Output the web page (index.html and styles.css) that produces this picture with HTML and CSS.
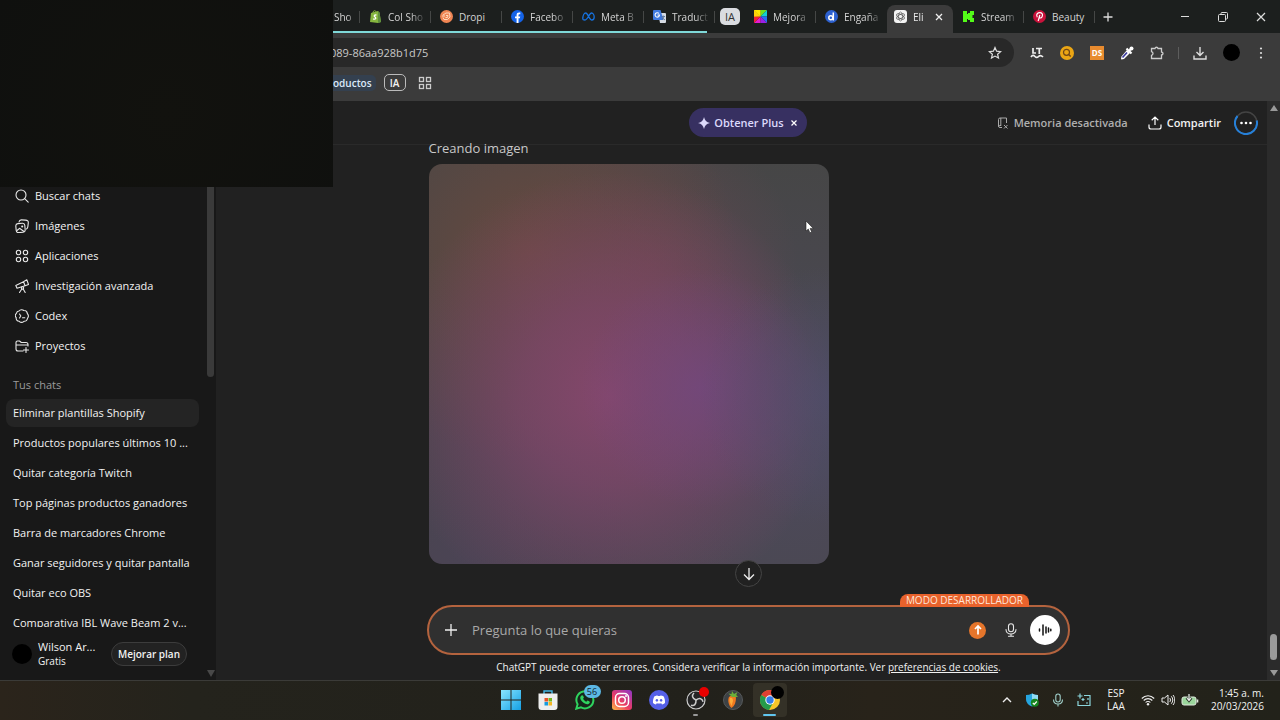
FILE: index.html
```html
<!DOCTYPE html>
<html lang="es">
<head>
<meta charset="utf-8">
<meta name="viewport" content="width=device-width, initial-scale=1">
<title>Eliminar plantillas Shopify</title>
<link rel="stylesheet" href="styles.css">
</head>
<body>
<div class="desktop">
  <header class="browser">
    <div class="tabstrip">
      <div class="tab-group">
        <button class="tab tab-cut"><span class="tab-title">Sho</span></button>
        <button class="tab">
          <svg class="fav" viewBox="0 0 13 13"><path d="M2 3l7-2 1.500 1.500L12 12l-3 1-8-1z" fill="#86b63f"/><path d="M9 1.500l1.500 1L12 12l-3 1z" fill="#5e8e3e"/><path d="M4 3c0-3 3-3 3.200-.5" fill="none" stroke="#86b63f"/><path d="M7.500 5.200C5.500 4.500 4.500 6 6 7s.7 2.800-1.800 1.800" fill="none" stroke="#fff" stroke-width="1.300"/></svg>
          <span class="tab-title">Col Sho</span></button>
        <button class="tab">
          <svg class="fav" viewBox="0 0 13 13"><circle cx="6.500" cy="6.500" r="6.500" fill="#ef8553"/><path d="M3 5l3-2h3.500L10 7 7.500 9.500H4L3 7.500M6 5.500h2L7.500 7.500H5.500M2 6h3" fill="none" stroke="#ffd8bd" stroke-width="1"/></svg>
          <span class="tab-title tab-full">Dropi</span></button>
        <button class="tab">
          <svg class="fav" viewBox="0 0 13 13"><circle cx="6.500" cy="6.500" r="6.500" fill="#1463e8"/><path d="M5.600 13V8.300H4V6.500h1.600V5c0-1.700.9-2.500 2.500-2.500l1.200.1v1.600h-.8c-.8 0-1 .4-1 1v1.300h1.700l-.3 1.800H7.500V13z" fill="#fff"/></svg>
          <span class="tab-title">Facebo</span></button>
        <button class="tab">
          <svg class="fav" viewBox="0 0 13 13"><path d="M.8 9C.8 6 2 3 3.800 3c2 0 3.700 7 6 7 1.500 0 2.400-1.100 2.400-3S11 3 9.500 3c-2.300 0-3.700 7-6.500 7C1.700 10 .8 10 .8 9z" fill="none" stroke="#1672df" stroke-width="1.300"/></svg>
          <span class="tab-title">Meta B</span></button>
        <button class="tab tab-last">
          <svg class="fav" viewBox="0 0 13 13"><path d="M5 3h7a1 1 0 0 1 1 1v8a1 1 0 0 1-1 1H7z" fill="#d5dbe4"/><path d="M1 0h6.500l3 10H1a1 1 0 0 1-1-1V1a1 1 0 0 1 1-1z" fill="#3f79df"/><path d="M6 3.500A2.200 2.200 0 1 0 6.500 5H4.500" fill="none" stroke="#fff" stroke-width="1.100"/><path d="M8.500 6.500h3.500M10.300 5.500v1M11.300 6.500L8.800 10M9 7.500l3 2.500" stroke="#536d95" stroke-width=".8" fill="none"/></svg>
          <span class="tab-title">Traduct</span></button>
      </div>
      <div class="chip-slot"><button class="group-chip">IA</button></div>
      <button class="tab">
        <svg class="fav" viewBox="0 0 13 13"><path d="M0 0h6.500v6.500z" fill="#ffe600"/><path d="M0 0l6.500 6.500L0 7z" fill="#ffa31c"/><path d="M6.500 0H13L6.500 6.500z" fill="#6fe11c"/><path d="M13 0v6.500H6.500z" fill="#13ced1"/><path d="M13 6.500V13L6.500 6.500z" fill="#276df2"/><path d="M6.500 6.500L13 13H6.500z" fill="#9a20e5"/><path d="M6.500 6.500V13H0z" fill="#e31bd0"/><path d="M0 6.500h6.500L0 13z" fill="#f32331"/><path d="M6.500 0v6.500H0V0z" fill="#ffe600" opacity=".7"/></svg>
        <span class="tab-title">Mejora</span></button>
      <button class="tab tab-last">
        <svg class="fav" viewBox="0 0 13 13"><circle cx="6.500" cy="6.500" r="6.500" fill="#2d61cf"/><circle cx="5.800" cy="7.800" r="2" fill="none" stroke="#fff" stroke-width="1.500"/><path d="M8.300 2.500v8" stroke="#fff" stroke-width="1.500"/></svg>
        <span class="tab-title">Engaña</span></button>
      <button class="tab tab-active">
        <svg class="fav" viewBox="0 0 13 13"><rect width="13" height="13" rx="3" fill="#f3f3f3"/><g fill="none" stroke="#555" stroke-width=".7"><ellipse cx="6.500" cy="6.500" rx="2" ry="4.500"/><ellipse cx="6.500" cy="6.500" rx="2" ry="4.500" transform="rotate(60 6.500 6.500)"/><ellipse cx="6.500" cy="6.500" rx="2" ry="4.500" transform="rotate(120 6.500 6.500)"/></g></svg>
        <span class="tab-title">Eli</span>
        <svg class="ico8" viewBox="0 0 8 8"><path d="M1 1l6 6M7 1L1 7" stroke="#eee" stroke-width="1.300"/></svg></button>
      <button class="tab">
        <svg class="fav" viewBox="0 0 13 13"><path d="M1 1h4v3h1V3h2V1h4v4h-1.500v3H12v4H8v-2H6V9H5v3H1z" fill="#53fc18"/></svg>
        <span class="tab-title">Stream</span></button>
      <button class="tab">
        <svg class="fav" viewBox="0 0 13 13"><circle cx="6.500" cy="6.500" r="6.500" fill="#c9123b"/><path d="M4.300 7.200C2.500 4 5 2.700 6.800 2.700c2.200 0 3 1.600 2.600 3.200-.5 2.200-2.400 2.500-3 1.600M6.800 5L5.200 11" fill="none" stroke="#fff" stroke-width="1.200"/></svg>
        <span class="tab-title tab-full">Beauty</span></button>
      <button class="icon-btn new-tab" aria-label="Nueva pestaña"><svg class="ico12" viewBox="0 0 12 12"><path d="M6 1.500v9M1.500 6h9" stroke="#ddd" stroke-width="1.300"/></svg></button>
      <div class="window-controls">
        <button class="icon-btn" aria-label="Minimizar"><svg class="ico12" viewBox="0 0 12 12"><path d="M2 5.500h8" stroke="#ddd"/></svg></button>
        <button class="icon-btn" aria-label="Restaurar"><svg class="ico12" viewBox="0 0 12 12"><g fill="none" stroke="#ddd"><rect x="1.500" y="3.500" width="7" height="7" rx="1"/><path d="M4 3.500v-1a1 1 0 0 1 1-1h4.500a1 1 0 0 1 1 1V7a1 1 0 0 1-1 1h-1"/></g></svg></button>
        <button class="icon-btn" aria-label="Cerrar"><svg class="ico12" viewBox="0 0 12 12"><path d="M2 2l8 8M10 2l-8 8" stroke="#ddd" stroke-width="1.200"/></svg></button>
      </div>
    </div>
    <div class="toolbar">
      <div class="address">
        <input class="url" type="text" aria-label="Dirección" value="089-86aa928b1d75">
        <button class="icon-btn" aria-label="Favorito"><svg class="ico14" viewBox="0 0 14 14"><path d="M7 1.500l1.600 3.700 4 .4-3 2.600.9 3.900L7 10.100l-3.500 2 .9-3.900-3-2.600 4-.4z" fill="none" stroke="#ddd" stroke-width="1.200"/></svg></button>
      </div>
      <div class="extensions">
        <button class="icon-btn" aria-label="LanguageTool"><svg class="ico14" viewBox="0 0 14 14"><path d="M3 2v5h3M6 2.500h6M9.300 2.500V8M1 11c1.500-2 2.500-2 4-.5s2.500 1 3.500 0S11 9 13 11" fill="none" stroke="#eee" stroke-width="1.700"/></svg></button>
        <button class="icon-btn" aria-label="Buscador"><svg class="ico14" viewBox="0 0 14 14"><circle cx="7" cy="7" r="7" fill="#eba614"/><circle cx="6.500" cy="6.300" r="3" fill="none" stroke="#704716" stroke-width="1.200"/><path d="M8.700 8.500l2 2" stroke="#704716" stroke-width="1.400"/></svg></button>
        <button class="ds-btn">DS</button>
        <button class="icon-btn" aria-label="Cuentagotas"><svg class="ico14" viewBox="0 0 14 14"><path d="M7 4l3 3-6 6-2.500.5L1 13l.5-2.500z" fill="#fff"/><path d="M7 6.500l-4.500 5" stroke="#3c3c9f" stroke-width="1.700"/><path d="M6.500 2.500l5 5M9 5l2.500-2.700" stroke="#fff" stroke-width="2.200"/><circle cx="11.500" cy="2.500" r="2" fill="#fff"/></svg></button>
        <button class="icon-btn" aria-label="Extensiones"><svg class="ico14" viewBox="0 0 14 14"><path d="M1.500 2.500H5c.3-1.700 2.700-1.700 3 0h3.500V6c2 .3 2 2.700 0 3v3.500h-10V9.300c2-.4 2-3.200 0-3.600z" fill="none" stroke="#ccc" stroke-width="1.300"/></svg></button>
        <span class="divider"></span>
        <button class="icon-btn" aria-label="Descargas"><svg class="ico14" viewBox="0 0 14 14"><path d="M7 1v8M3.500 6L7 9.500 10.500 6M1 9.500V13h12V9.500" fill="none" stroke="#ddd" stroke-width="1.400"/></svg></button>
        <button class="avatar-dot" aria-label="Perfil"></button>
        <button class="icon-btn kebab" aria-label="Menú"><svg class="ico14" viewBox="0 0 14 14"><g fill="#ddd"><circle cx="7" cy="2.500" r="1.100"/><circle cx="7" cy="7" r="1.100"/><circle cx="7" cy="11.500" r="1.100"/></g></svg></button>
      </div>
    </div>
    <nav class="bookmarks">
      <button class="bookmark-blue">oductos</button>
      <button class="bookmark-ia">IA</button>
      <button class="icon-btn" aria-label="Aplicaciones"><svg class="ico14" viewBox="0 0 14 14"><g fill="none" stroke="#ccc" stroke-width="1.300"><rect x="1.500" y="1.500" width="4" height="4"/><rect x="8.500" y="1.500" width="4" height="4"/><rect x="1.500" y="8.500" width="4" height="4"/><rect x="8.500" y="8.500" width="4" height="4"/></g></svg></button>
    </nav>
  </header>

  <div class="app">
    <aside class="sidebar">
      <div class="side-scroll">
        <nav class="side-nav">
          <a class="nav-item" href="#"><svg class="ico14" viewBox="0 0 14 14"><g class="line"><circle cx="6" cy="6" r="5"/><path d="M9.700 9.700l3.500 3.500"/></g></svg>Buscar chats</a>
          <a class="nav-item" href="#"><svg class="ico14" viewBox="0 0 14 14"><g class="line"><rect x="1" y="4.500" width="9" height="9" rx="2.300" transform="rotate(-5 5 9)"/><path d="M4 3C4.300 1.300 5 .8 6.500.9l4 .2c2 .2 3 1 2.800 2.800l-.5 4c-.2 1.500-.6 1.800-1.300 2.100M2 11.500l2.500-2.200 4.500 3.200"/><circle cx="7.200" cy="7.500" r=".5"/></g></svg>Imágenes</a>
          <a class="nav-item" href="#"><svg class="ico14" viewBox="0 0 14 14"><g class="line"><circle cx="3.500" cy="3.500" r="2.200"/><circle cx="10.500" cy="3.500" r="2.200"/><circle cx="3.500" cy="10.500" r="2.200"/><circle cx="10.500" cy="10.500" r="2.200"/></g></svg>Aplicaciones</a>
          <a class="nav-item" href="#"><svg class="ico14" viewBox="0 0 14 14"><g class="line"><path d="M.8 6.500L8.500 2.700l1.600 4L2 9.300zM8.500 2.700L11.800.8l1.700 4.600-3.400 1.300"/><circle cx="7.500" cy="9" r="1.200"/><path d="M6.800 10L4.500 13.500M8.200 10l2 3.500"/></g></svg>Investigación avanzada</a>
          <a class="nav-item" href="#"><svg class="ico14" viewBox="0 0 14 14"><g class="line"><path d="M4 2c1.200-1.500 3.500-1.600 4.800-.5 2-.1 3.400 1.200 3.500 3C13.700 6 13.500 8 12.500 9.300c-.2 2-1.800 3.200-3.500 3-1.600 1.400-3.600 1.200-4.800 0C2 12 .9 10.500 1.200 8.700.1 7.400.2 5.400 1.400 4.300 1.800 2.700 2.600 2.100 4 2z"/><path d="M4.500 5l1.300 2-1.300 2M7.500 8.800h2.300"/></g></svg>Codex</a>
          <a class="nav-item" href="#"><svg class="ico14" viewBox="0 0 14 14"><g class="line"><path d="M8 12H3a2 2 0 0 1-2-2V3.500C1 2.500 1.700 2 2.500 2h2l1.800 1.500H11a2 2 0 0 1 2 2V7M1 6h12M11 8.500v5M8.500 11h5"/></g></svg>Proyectos</a>
        </nav>
        <h2 class="side-title">Tus chats</h2>
        <nav class="chat-list">
          <a class="chat chat-active" href="#">Eliminar plantillas Shopify</a>
          <a class="chat" href="#">Productos populares últimos 10 ...</a>
          <a class="chat" href="#">Quitar categoría Twitch</a>
          <a class="chat" href="#">Top páginas productos ganadores</a>
          <a class="chat" href="#">Barra de marcadores Chrome</a>
          <a class="chat" href="#">Ganar seguidores y quitar pantalla</a>
          <a class="chat" href="#">Quitar eco OBS</a>
          <a class="chat" href="#">Comparativa JBL Wave Beam 2 v...</a>
        </nav>
      </div>
      <div class="profile">
        <span class="profile-pic"></span>
        <div class="profile-text"><span class="profile-name">Wilson Ar...</span><span class="profile-plan">Gratis</span></div>
        <button class="upgrade">Mejorar plan</button>
      </div>
      <div class="side-bar"><span class="side-thumb"></span><svg class="ico8" viewBox="0 0 8 8"><path d="M0 1h8L4 8z" fill="#484848"/></svg></div>
    </aside>

    <main class="main">
      <div class="main-column">
        <header class="chat-head">
          <span></span>
          <button class="plus-btn"><svg class="ico12" viewBox="0 0 12 12"><path d="M6 0c.8 3.600 2.400 5.200 6 6-3.600.8-5.200 2.400-6 6-.8-3.600-2.400-5.200-6-6 3.600-.8 5.200-2.400 6-6z" fill="#dcd9fb"/></svg>Obtener Plus<svg class="ico8" viewBox="0 0 8 8"><path d="M1.500 1.500l5 5M6.500 1.500l-5 5" stroke="#fff" stroke-width="1.200"/></svg></button>
          <div class="head-actions">
            <button class="head-btn muted"><svg class="ico12" viewBox="0 0 12 12"><path d="M5 10.500H3a1.500 1.500 0 0 1-1.500-1.500V2.500A1.500 1.500 0 0 1 3 1h6.500v5M3.800 1v8M1.500 9.500C1.500 8.500 2.500 8.500 4 8.500M7 8l3.500 3.500M10.500 8L7 11.500" fill="none" stroke="#aaa"/></svg>Memoria desactivada</button>
            <button class="head-btn"><svg class="ico14" viewBox="0 0 14 14"><path d="M7 9V1M3.700 4.200L7 1l3.300 3.200M1 8.500V11a2 2 0 0 0 2 2h8a2 2 0 0 0 2-2V8.500" fill="none" stroke="#fff" stroke-width="1.200"/></svg>Compartir</button>
            <button class="more" aria-label="Más opciones"><svg class="ico24" viewBox="0 0 24 24"><circle cx="12" cy="12" r="11" fill="none" stroke="#444" stroke-width="1.500"/><path d="M3.500 5A11 11 0 1 0 22.700 9.500" fill="none" stroke="#2680d9" stroke-width="2"/><g fill="#fff"><circle cx="7.500" cy="12" r="1.300"/><circle cx="12" cy="12" r="1.300"/><circle cx="16.500" cy="12" r="1.300"/></g></svg></button>
          </div>
        </header>
        <section class="thread">
          <div class="column">
            <p class="status">Creando imagen</p>
            <div class="placeholder">
              <svg class="pointer" viewBox="0 0 9 14"><path d="M1 1v10l2.300-2 1.600 3.800 1.800-.8-1.600-3.600H8.300z" fill="#fff" stroke="#222" stroke-width=".6"/></svg>
            </div>
          </div>
        </section>
        <footer class="composer-area">
          <button class="scroll-down" aria-label="Bajar"><svg class="ico14" viewBox="0 0 14 14"><path d="M7 1v11.500M2 7.500l5 5 5-5" fill="none" stroke="#eee" stroke-width="1.300"/></svg></button>
          <form class="composer">
            <span class="dev-badge">MODO DESARROLLADOR</span>
            <button type="button" class="icon-btn" aria-label="Añadir"><svg class="ico14" viewBox="0 0 14 14"><path d="M7 1v12M1 7h12" stroke="#eee" stroke-width="1.300"/></svg></button>
            <input class="prompt" type="text" placeholder="Pregunta lo que quieras" aria-label="Pregunta lo que quieras">
            <button type="button" class="send" aria-label="Enviar"><svg class="ico12" viewBox="0 0 12 12"><path d="M6 10.500v-8M3 5l3-3 3 3" fill="none" stroke="#fff" stroke-width="1.700"/></svg></button>
            <button type="button" class="icon-btn" aria-label="Dictar"><svg class="ico14" viewBox="0 0 14 14"><g class="line"><rect x="4.500" y=".8" width="5" height="8" rx="2.500"/><path d="M2 6.500c0 6 10 6 10 0M7 11v2.300M4.500 13.300h5"/></g></svg></button>
            <button type="button" class="voice" aria-label="Modo de voz"><svg class="ico14" viewBox="0 0 14 14"><path d="M1.500 6v2M5 2v10M8 4v6M10.500 5v4M12.800 6.300v1.400" stroke="#111" stroke-width="1.500" stroke-linecap="round"/></svg></button>
          </form>
          <p class="notice">ChatGPT puede cometer errores. Considera verificar la información importante. Ver <a href="#">preferencias de cookies</a>.</p>
        </footer>
      </div>
      <div class="main-bar"><svg class="ico8" viewBox="0 0 8 8"><path d="M0 7h8L4 1z" fill="#999"/></svg><span class="main-thumb"></span><svg class="ico8" viewBox="0 0 8 8"><path d="M0 1h8L4 7z" fill="#999"/></svg></div>
    </main>
  </div>

  <footer class="taskbar">
    <span></span>
    <div class="dock">
      <button class="dock-item" aria-label="Inicio"><svg class="ico20" viewBox="0 0 20 20"><defs><linearGradient id="win" x2="1" y2="1"><stop stop-color="#8ae6ff"/><stop offset="1" stop-color="#149fe4"/></linearGradient></defs><path d="M0 0h9.500v9.500H0zM10.500 0H20v9.500h-9.500zM0 10.500h9.500V20H0zM10.500 10.500H20V20h-9.500z" fill="url(#win)"/></svg></button>
      <button class="dock-item" aria-label="Tienda"><svg class="ico20" viewBox="0 0 20 20"><path d="M6 4V1h8v3" fill="none" stroke="#44b9e8" stroke-width="1.400"/><path d="M.5 3.500h19V17a3 3 0 0 1-3 3h-13a3 3 0 0 1-3-3z" fill="#eee"/><path d="M6.500 8H10v3.500H6.500z" fill="#e65328"/><path d="M10.500 8H14v3.500h-3.500z" fill="#75b51d"/><path d="M6.500 12H10v3.500H6.500z" fill="#169bdf"/><path d="M10.500 12H14v3.500h-3.500z" fill="#f5b522"/></svg></button>
      <button class="dock-item" aria-label="WhatsApp"><svg class="ico20" viewBox="0 0 20 20"><path d="M1.300 18.700l1.300-4.500A8.500 8.500 0 1 1 6 17.400z" fill="#17261b" stroke="#2fd35e" stroke-width="2"/><path d="M6.500 5.500c1-.8 1.600-.2 2.400 2l-.8 1.200c.8 1.500 1.800 2.400 3.200 3l1.200-1.200c2 .9 2.500 1.300 2.300 2-.7 2.100-3 2.100-5 1.100-2.300-1.100-4-3.200-4.500-5-.2-1.300.2-2.300 1.200-3.100z" fill="#2fd35e"/></svg><span class="count">56</span></button>
      <button class="dock-item" aria-label="Instagram"><svg class="ico20" viewBox="0 0 20 20"><defs><linearGradient id="insta" x1="0" y1="1" x2=".8" y2="0"><stop stop-color="#ffc247"/><stop offset=".45" stop-color="#ed3c60"/><stop offset="1" stop-color="#9b37bb"/></linearGradient></defs><rect width="20" height="20" rx="3" fill="url(#insta)"/><g fill="none" stroke="#fff" stroke-width="1.500"><rect x="3.500" y="3.500" width="13" height="13" rx="4"/><circle cx="10" cy="10" r="3.300"/></g><circle cx="14" cy="6" r="1" fill="#fff"/></svg></button>
      <button class="dock-item" aria-label="Discord"><svg class="ico20" viewBox="0 0 20 20"><circle cx="10" cy="10" r="10" fill="#5560e8"/><path d="M5.500 6.300C7 5.500 8 5.300 8.500 5.400l.4.700h2.200l.4-.7c1 0 2.100.4 3 .9 1.200 2 1.700 4.500 1.500 6.700-1 .8-2 1.200-3 1.400l-.7-1.100c-1.500.4-3.100.4-4.600 0L7 14.400c-1.100-.2-2.100-.7-3-1.400-.2-2.300.3-4.800 1.500-6.700z" fill="#fff"/><ellipse cx="7.900" cy="10.300" rx="1.200" ry="1.400" fill="#5560e8"/><ellipse cx="12.100" cy="10.300" rx="1.200" ry="1.400" fill="#5560e8"/></svg></button>
      <button class="dock-item" aria-label="OBS"><svg class="ico20" viewBox="0 0 20 20"><circle cx="10" cy="10" r="9" fill="#242425" stroke="#ccc" stroke-width="1.200"/><g fill="none" stroke="#ccc" stroke-width="1.500"><path d="M10 10C6 8 5.500 5.500 8 3"/><path d="M10 10C6 8 5.500 5.500 8 3" transform="rotate(120 10 10)"/><path d="M10 10C6 8 5.500 5.500 8 3" transform="rotate(240 10 10)"/></g></svg><span class="dot dot-red"></span><span class="mark"></span></button>
      <button class="dock-item" aria-label="FL Studio"><svg class="ico20" viewBox="0 0 20 20"><circle cx="10" cy="10" r="9.500" fill="#3d4144" stroke="#56595b"/><path d="M6 7c2-2 5-1.500 7 .5 0 5-1.500 8.500-4.500 10.500C5.500 15.500 4.500 10 6 7z" fill="#f17a20"/><path d="M7 8c1.500-1 3 0 3 3l-1.500 5C7 13 6 10 7 8z" fill="#ffad38"/><path d="M9 7L5.500 3.500l3 .5L9 1l2 3 3.500-2-1.300 3L15 7z" fill="#6caf3a"/></svg></button>
      <button class="dock-item dock-current" aria-label="Chrome"><svg class="ico20" viewBox="0 0 20 20"><circle cx="10" cy="10" r="10" fill="#f8c529"/><path d="M10 10L1.300 5A10 10 0 0 1 18.700 5z" fill="#df4033"/><path d="M10 10L1.300 5A10 10 0 0 0 9 20l4.500-8z" fill="#259b4b"/><circle cx="10" cy="10" r="4.700" fill="#fff"/><circle cx="10" cy="10" r="3.700" fill="#357de8"/></svg><span class="dot dot-black"></span><span class="mark mark-blue"></span></button>
    </div>
    <div class="tray">
      <svg class="ico12" viewBox="0 0 12 12"><path d="M2 8l4-4 4 4" fill="none" stroke="#eee" stroke-width="1.400"/></svg>
      <svg class="ico14" viewBox="0 0 14 14"><path d="M1 2c2 0 4-.5 6-1.500C9 1.500 11 2 13 2v4c0 4-3 6.500-6 7.500C4 12.500 1 10 1 6z" fill="#26a5df"/><path d="M7 .5C9 1.500 11 2 13 2v5H7z" fill="#8fdcf5"/><circle cx="9.800" cy="9.800" r="4" fill="#15851f"/><path d="M7.800 9.800l1.400 1.500 2.600-2.800" fill="none" stroke="#fff" stroke-width="1.200"/></svg>
      <svg class="ico14" viewBox="0 0 14 14"><g fill="none" stroke="#a0cfca" stroke-width="1.100"><rect x="4.800" y="1" width="4.400" height="8" rx="2.200"/><path d="M2.500 6.500c0 6 9 6 9 0M7 11v2.500"/></g></svg>
      <svg class="ico14" viewBox="0 0 14 14"><g fill="none" stroke="#8cd6dc" stroke-width="1.200"><path d="M7 2.500h6v10H1V8"/><path d="M3 .5v5M.5 3h5M6 5v3M4.500 6.500h3M11 5v2M11 10H9"/></g></svg>
      <span class="lang">ESP<br>LAA</span>
      <div class="system">
        <svg class="ico14" viewBox="0 0 14 14"><g fill="none" stroke="#eee" stroke-width="1.100"><path d="M.8 5.500c3.500-3.600 8.900-3.600 12.400 0M2.700 7.500c2.400-2.500 6.200-2.500 8.600 0M4.600 9.500c1.300-1.400 3.500-1.400 4.800 0"/></g><circle cx="7" cy="11.300" r="1.200" fill="#eee"/></svg>
        <svg class="ico14" viewBox="0 0 14 14"><path d="M1 5h2.500L7 2v10L3.500 9H1zM8.700 5c1 1 1 3 0 4M10.300 3.300c2 2 2 5.400 0 7.400M12 2c2.300 2.800 2.300 7.200 0 10" fill="none" stroke="#eee"/></svg>
        <svg class="battery" viewBox="0 0 18 14"><rect x="1" y="4" width="14" height="8" rx="2" fill="#9bd69c" stroke="#dfe8dd"/><path d="M16.500 6.500v3" stroke="#dfe8dd" stroke-width="1.600"/><path d="M8 1v6M5.500 5L8 8l2.500-3" fill="none" stroke="#273427" stroke-width="2.400"/><path d="M8 1v6M6 5l2 2.500L10 5" fill="none" stroke="#eee" stroke-width="1.200"/></svg>
      </div>
      <time class="clock">1:45 a. m.<br>20/03/2026</time>
    </div>
  </footer>
  <div class="camera" aria-hidden="true"></div>
</div>
</body>
</html>
```
FILE: styles.css
```css
* { box-sizing: border-box; }
body { margin: 0; background: #212121; color: #f2f2f2; font: 11px/16px "Open Sans", "Noto Sans", sans-serif; }
button, input { font: inherit; color: inherit; border: 0; background: none; padding: 0; margin: 0; outline: 0; }
h2, p { margin: 0; font-weight: 400; }
a { color: inherit; }
svg { display: block; flex: none; }
.line { fill: none; stroke: #e8e8e8; stroke-width: 1.100; stroke-linecap: round; stroke-linejoin: round; }
.ico8 { width: 8px; height: 8px; }
.ico12 { width: 12px; height: 12px; }
.ico14 { width: 14px; height: 14px; }
.ico20 { width: 20px; height: 20px; }
.ico24 { width: 24px; height: 24px; }
.icon-btn { display: flex; align-items: center; justify-content: center; flex: none; }
.desktop { display: flex; flex-direction: column; height: 100vh; overflow: hidden; }

/* Browser chrome */
.browser { flex: none; background: #3b3b3b; }
.tabstrip { display: flex; height: 33px; padding-left: 333px; background: #1c1f1e; }
.tab-group { display: flex; position: relative; }
.tab-group::after { content: ""; position: absolute; left: 0; right: 8px; bottom: 0; height: 2px; background: #7fd8d8; }
.tab { position: relative; display: flex; align-items: center; gap: 6px; width: 71px; flex: none; padding: 0 5px 0 9px; font-size: 10px; color: #d4d4d4; text-align: left; }
.tab::after { content: ""; position: absolute; right: 0; top: 11px; height: 12px; width: 1px; background: #454746; }
.tab-last::after, .tab-active::after { display: none; }
.tab-group .tab-last::after { display: block; }
.tab-cut { width: 27px; padding: 0 4px 0 1px; }
.fav { width: 13px; height: 13px; }
.tab-title { flex: 1; min-width: 0; white-space: nowrap; mask-image: linear-gradient(to right, #000 60%, transparent); }
.tab-full { mask-image: none; }
.tab-active { width: 66px; padding: 0 10px 5px 7px; margin-top: 5px; background: #3b3b3b; border-radius: 8px 8px 0 0; color: #e8e8e8; }
.chip-slot { display: flex; align-items: center; justify-content: center; width: 30px; }
.group-chip { width: 20px; height: 17px; border-radius: 5px; background: #dadce0; color: #333; line-height: 16px; }
.new-tab { width: 26px; }
.window-controls { display: flex; gap: 26px; margin-left: auto; padding-right: 13px; }
.toolbar { display: flex; align-items: center; height: 39px; padding: 0 12px 0 320px; }
.address { display: flex; align-items: center; flex: 1; height: 29px; padding: 0 12px 0 10px; background: #282828; border-radius: 0 15px 15px 0; }
.url { flex: 1; min-width: 0; color: #c9c9c9; }
.extensions { display: flex; align-items: center; gap: 16px; margin-left: 16px; }
.ds-btn { width: 14px; height: 14px; background: #e88b2f; color: #fff; font-size: 8px; line-height: 14px; font-weight: 700; text-align: center; }
.divider { width: 1px; height: 12px; margin: 0 -2px; background: #5d5d5d; }
.avatar-dot { width: 17px; height: 17px; border-radius: 50%; background: #000; }
.kebab { margin-left: -2px; }
.bookmarks { display: flex; align-items: center; height: 29px; padding: 0 0 8px 333px; gap: 8px; }
.bookmark-blue { height: 16px; padding-right: 4px; background: #34404f; color: #dbe8f8; font-size: 10px; line-height: 14px; font-weight: 600; border-radius: 0 5px 5px 0; }
.bookmark-ia { width: 22px; height: 17px; margin-right: 4px; border: 1px solid #bbb; border-radius: 5px; font-size: 10px; font-weight: 600; line-height: 14px; }
.camera { position: fixed; left: 0; top: 0; width: 333px; height: 187px; background: radial-gradient(circle at 50% 60%, #12120e, #0f100e); }

/* Sidebar */
.app { display: flex; flex: 1; min-height: 0; }
.sidebar { position: relative; display: flex; flex-direction: column; width: 216px; flex: none; background: #181818; }
.side-scroll { flex: 1; min-height: 0; overflow: hidden; padding: 80px 17px 0 6px; }
.nav-item { display: flex; align-items: center; gap: 6px; height: 30px; padding-left: 9px; text-decoration: none; white-space: nowrap; }
.side-title { padding: 16px 7px 6px; font-size: 11px; color: #9b9b9b; }
.chat-list { display: flex; flex-direction: column; gap: 2px; }
.chat { height: 28px; padding: 0 7px; line-height: 28px; border-radius: 8px; text-decoration: none; white-space: nowrap; }
.chat-active { background: #242424; }
.profile { display: flex; align-items: center; height: 53px; flex: none; padding: 0 29px 0 12px; }
.profile-pic { width: 20px; height: 20px; flex: none; border-radius: 50%; background: #000; }
.profile-text { display: flex; flex-direction: column; flex: 1; padding-left: 6px; white-space: nowrap; line-height: 14px; }
.profile-plan { font-size: 10px; }
.upgrade { width: 76px; height: 24px; border: 1px solid #3c3c3c; border-radius: 12px; background: #222; font-size: 10px; font-weight: 600; white-space: nowrap; }
.side-bar { position: absolute; right: 1px; top: 0; bottom: 3px; width: 9px; display: flex; flex-direction: column; justify-content: space-between; align-items: center; }
.side-thumb { width: 7px; height: 48%; border-radius: 0 0 4px 4px; background: #3a3a3a; }

/* Conversation */
.main { display: flex; flex: 1; min-width: 0; }
.main-column { display: flex; flex-direction: column; flex: 1; min-width: 0; }
.main-bar { display: flex; flex-direction: column; align-items: center; width: 13px; padding: 3px 0; background: #2b2b2b; }
.main-thumb { width: 7px; height: 26px; margin: auto 0 9px; border-radius: 4px; background: #9a9a9a; }
.chat-head { display: grid; grid-template-columns: 1fr auto 1fr; align-items: center; height: 44px; flex: none; padding: 0 9px 0 22px; border-bottom: 1px solid #2a2a2a; }
.plus-btn { display: flex; align-items: center; gap: 4px; height: 29px; padding: 0 9px; border-radius: 15px; background: #373061; color: #dcd9fb; font-weight: 600; }
.plus-btn .ico8 { margin-left: 2px; }
.head-actions { display: flex; align-items: center; justify-content: flex-end; gap: 20px; }
.head-btn { display: flex; align-items: center; gap: 5px; font-weight: 600; white-space: nowrap; }
.muted { color: #afafaf; }
.more { margin-left: -7px; }
.thread { flex: 1; min-height: 0; overflow: hidden; margin-top: -5px; padding-left: 14px; }
.column { max-width: 640px; margin: 0 auto; }
.status { padding-bottom: 8px; font-size: 13px; font-weight: 500; color: #c8c8c8; }
.placeholder { position: relative; width: 400px; aspect-ratio: 1; border-radius: 13px; background:
  radial-gradient(circle at 100% 58%, #51507299, transparent 28%),
  radial-gradient(circle at 68% 56%, #734880bb, transparent 34%),
  radial-gradient(circle at 45% 58%, #88476eee, #80466abb 28%, transparent 70%),
  radial-gradient(circle at 25% 22%, #704a3ecc, transparent 48%),
  radial-gradient(circle at 55% 25%, #70475299, transparent 40%),
  radial-gradient(circle at 10% 100%, #4d435abb, transparent 50%),
  radial-gradient(circle at 90% 75%, #4f4a60cc, transparent 65%),
  #464646; }
.pointer { position: absolute; left: 94%; top: 14%; width: 9px; height: 14px; }
.composer-area { position: relative; display: flex; flex-direction: column; align-items: center; flex: none; padding-left: 14px; }
.scroll-down { position: absolute; bottom: 93px; display: flex; align-items: center; justify-content: center; width: 27px; height: 27px; border: 1px solid #444; border-radius: 50%; background: #212121; }
.composer { position: relative; display: flex; align-items: center; width: 100%; max-width: 643px; height: 50px; padding: 0 8px 0 15px; border: 2px solid #b4633e; border-radius: 25px; background: #303030; }
.prompt { flex: 1; min-width: 0; margin-left: 14px; font-size: 13px; }
.prompt::placeholder { color: #a9a9a9; opacity: 1; }
.send { display: flex; align-items: center; justify-content: center; width: 17px; height: 17px; margin-right: 18px; border-radius: 50%; background: #e5752b; }
.voice { display: flex; align-items: center; justify-content: center; width: 30px; height: 30px; margin-left: 12px; border-radius: 50%; background: #fff; }
.dev-badge { position: absolute; right: 39px; bottom: 100%; height: 13px; padding: 0 6px; border-radius: 8px 8px 0 0; background: #e8622c; color: #ffe6d8; font-size: 10px; line-height: 13px; white-space: nowrap; }
.notice { padding: 4px 0 5px; font-size: 10px; line-height: 16px; white-space: nowrap; }

/* Taskbar */
.taskbar { display: grid; grid-template-columns: 1fr auto 1fr; align-items: center; height: 40px; flex: none; padding: 0 16px 2px; border-top: 1px solid #3b3b38; background: linear-gradient(to right, #2b241b, #24231c 15%, #22211b 55%, #28231a 68%, #22221a); }
.dock { display: flex; gap: 3px; }
.dock-item { position: relative; display: flex; align-items: center; justify-content: center; width: 34px; height: 34px; border-radius: 4px; }
.dock-current { background: #343127; }
.count { position: absolute; right: 1px; top: 2px; width: 17px; height: 13px; border-radius: 7px; background: #5cb8e4; color: #12222c; font-size: 9px; line-height: 13px; }
.dot { position: absolute; border-radius: 50%; }
.dot-red { width: 10px; height: 10px; right: 4px; top: 4px; background: #e80000; }
.dot-black { width: 13px; height: 13px; right: 3px; top: 3px; background: #000; }
.mark { position: absolute; bottom: 1px; width: 5px; height: 2px; border-radius: 1px; background: #999; }
.mark-blue { width: 13px; background: #61c5ef; }
.tray { display: flex; align-items: center; justify-content: flex-end; gap: 12px; font-size: 10px; line-height: 13px; }
.lang { padding-left: 4px; text-align: center; }
.system { display: flex; gap: 6px; padding-left: 4px; }
.battery { width: 18px; height: 14px; }
.clock { text-align: right; white-space: nowrap; }
```
